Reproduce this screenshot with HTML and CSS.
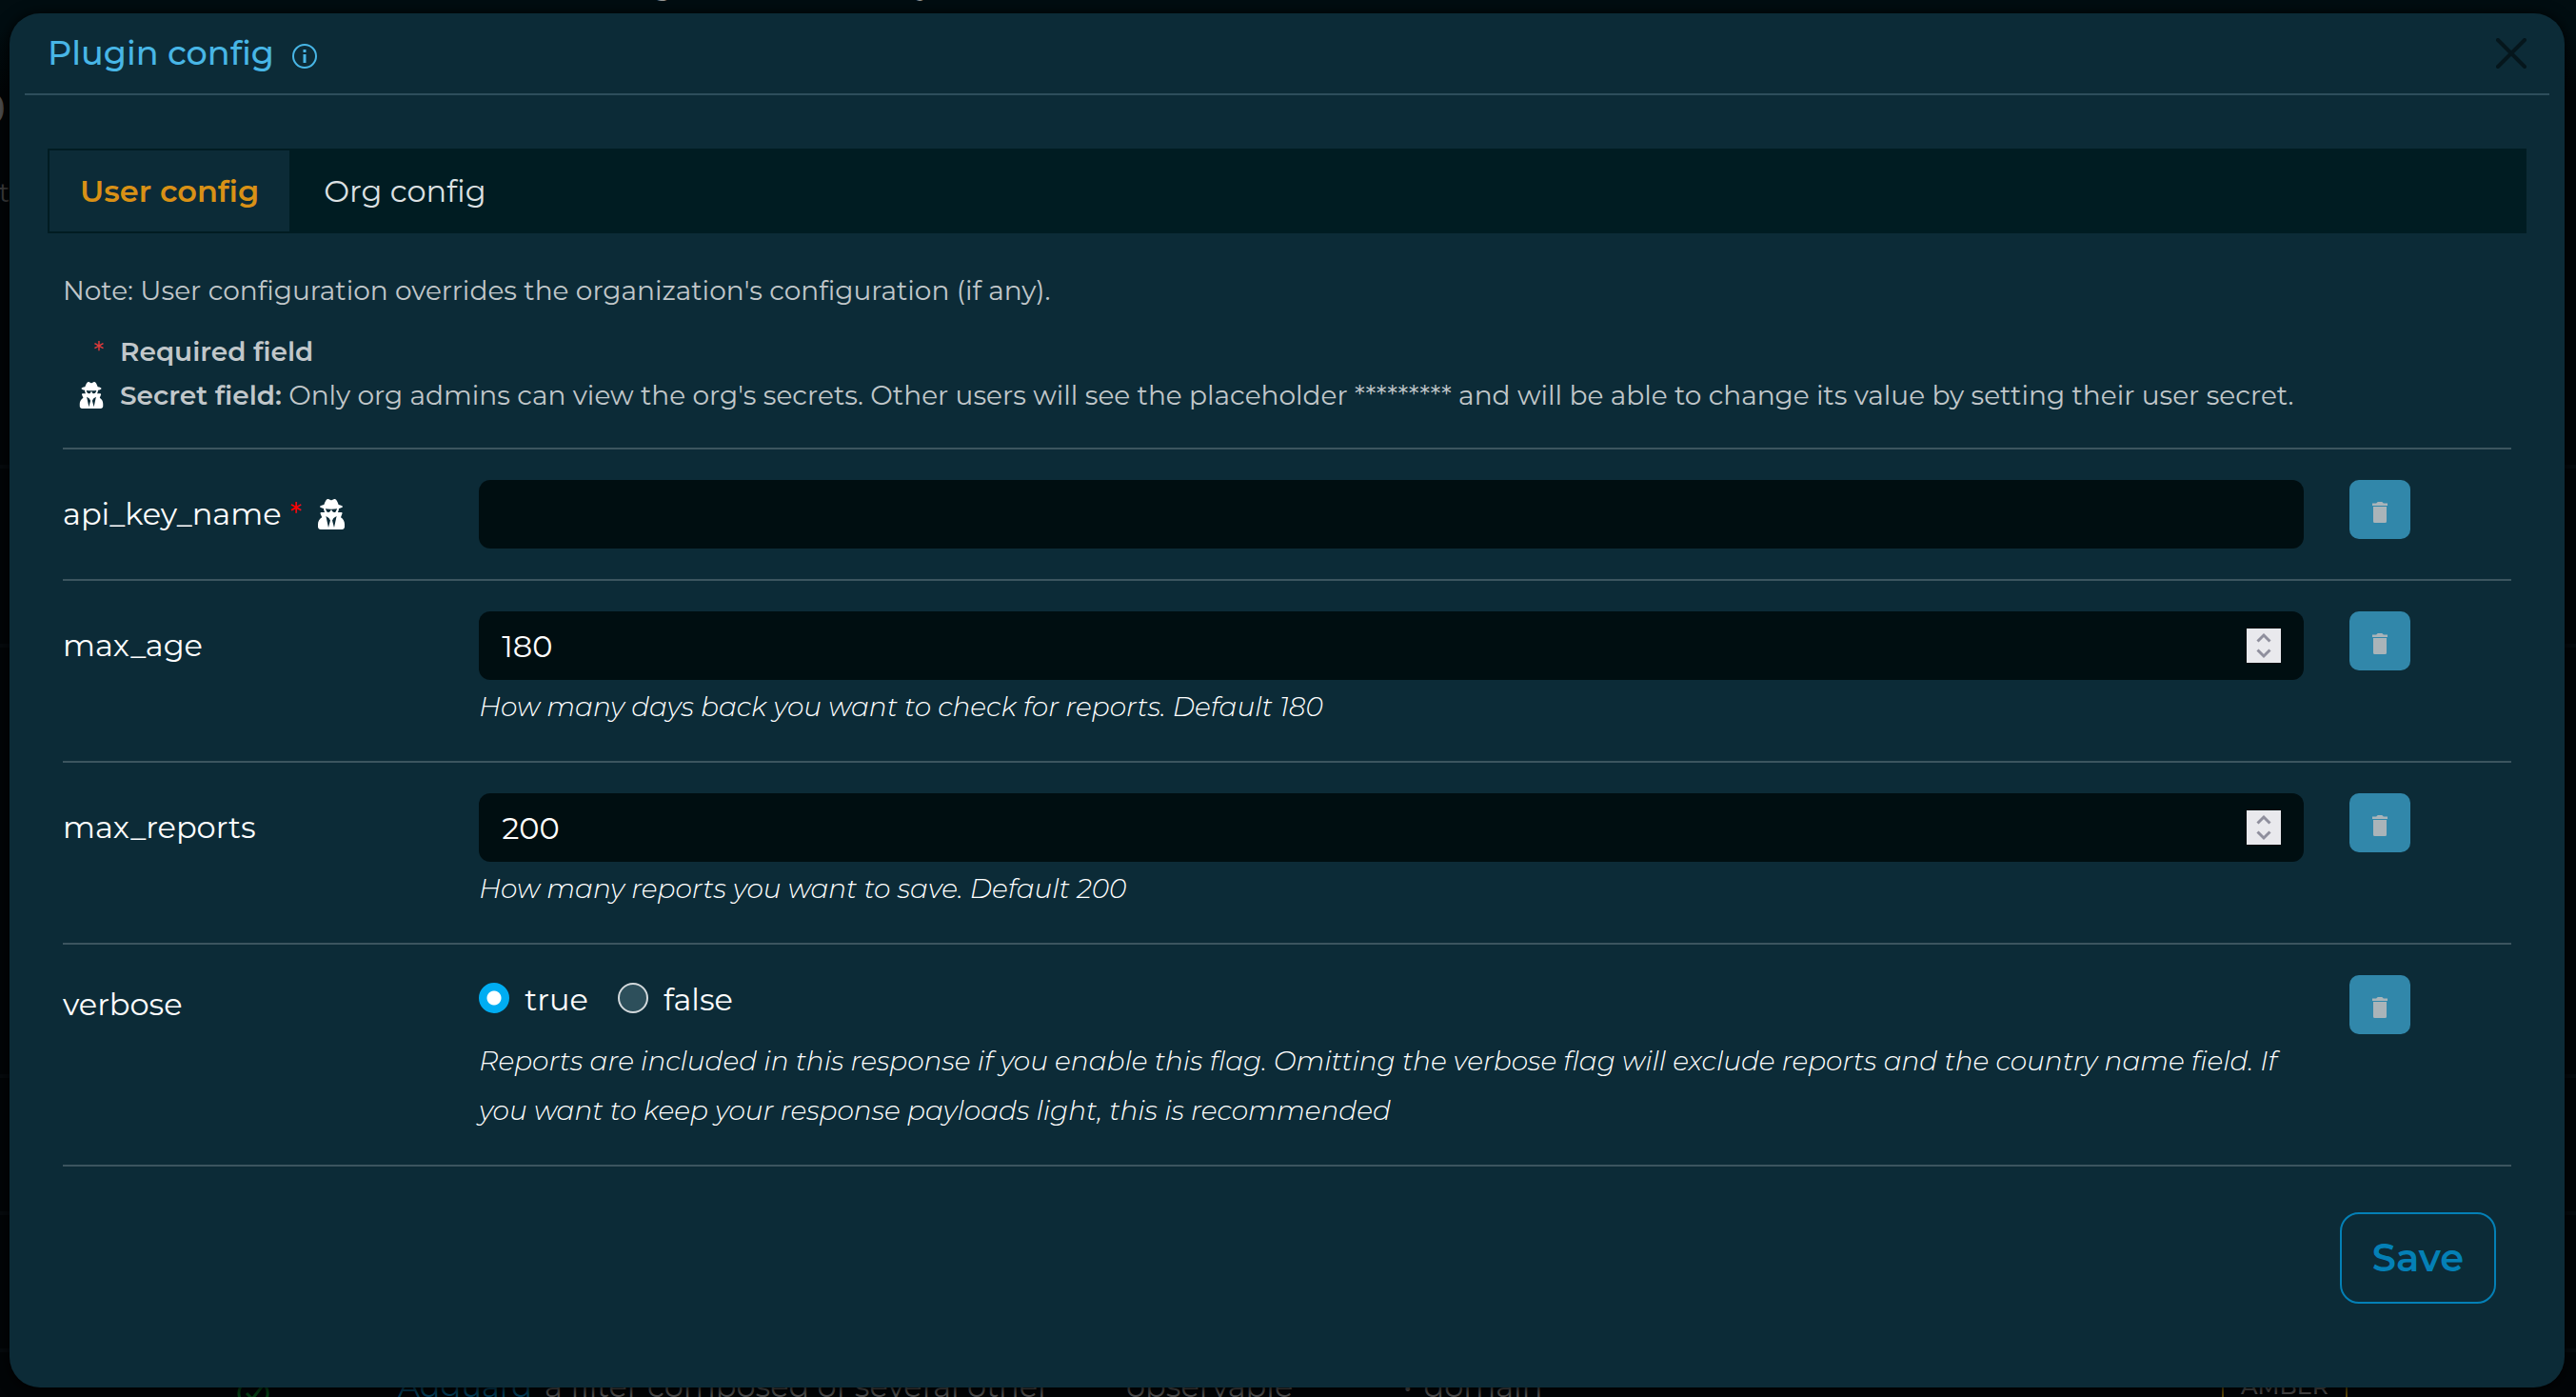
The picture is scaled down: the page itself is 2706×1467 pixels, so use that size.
FILE: index.html
```html
<!DOCTYPE html>
<html lang="en">
<head>
<meta charset="utf-8">
<meta name="viewport" content="width=device-width, initial-scale=1">
<title>Plugin config</title>
<link rel="stylesheet" href="styles.css">
</head>
<body>
<svg class="sprite" aria-hidden="true">
  <symbol id="secret" viewBox="0 0 448 512"><path fill="currentColor" d="M383.9 308.3l23.9-62.6c4-10.5-3.7-21.7-15-21.7h-58.5c11-18.9 17.8-40.6 17.8-64v-.3c39.2-7.8 64-19.1 64-31.7 0-13.3-27.3-25.1-70.1-33-9.2-32.8-27-65.8-40.6-82.8-9.5-11.9-25.9-15.6-39.5-8.8l-27.6 13.8c-9 4.5-19.6 4.5-28.6 0L182.1 3.4c-13.6-6.8-30-3.1-39.5 8.8-13.5 17-31.4 50-40.6 82.8-42.7 7.9-70 19.7-70 33 0 12.6 24.8 23.9 64 31.7v.3c0 23.4 6.8 45.1 17.8 64H56.3c-11.5 0-19.2 11.7-14.7 22.3l25.8 60.2C27.3 329.8 0 372.7 0 422.4v44.8C0 491.9 20.1 512 44.8 512h358.4c24.7 0 44.8-20.1 44.8-44.8v-44.8c0-48.4-25.8-90.4-64.1-114.1zM176 480l-41.6-192 49.6 32 24 40-32 120zm96 0l-32-120 24-40 49.6-32L272 480zm41.7-298.5c-3.9 11.9-7 24.6-16.5 33.4-10.1 9.3-48 22.4-64-25-2.8-8.4-15.4-8.4-18.3 0-17 50.2-56 32.4-64 25-9.5-8.8-12.7-21.5-16.5-33.4-.8-2.5-6.3-5.7-6.3-5.8v-10.8c28.3 3.6 61 5.8 96 5.8s67.7-2.1 96-5.8v10.8c-.1.1-5.6 3.2-6.4 5.8z"/></symbol>
  <symbol id="trash" viewBox="0 0 16 22"><path fill="currentColor" d="M0 1.6h4.200Q5 0 6 0h4q1 0 1.800 1.600H16V4H0zM1 5h14v15.500q0 1.500-1.500 1.500h-11Q1 22 1 20.500z"/></symbol>
  <symbol id="chevrons" viewBox="0 0 36 36"><path fill="none" stroke="currentColor" stroke-width="3" d="M11.500 13.500 18 7l6.500 6.500M11.500 22.500 18 29l6.500-6.500"/></symbol>
</svg>

<div class="page" aria-hidden="true">
  <div class="page-nav"><span>g</span><span>y</span></div>
  <div class="page-title">0</div>
  <div class="page-sub">t</div>
  <div class="page-table">
    <div class="page-row"></div>
    <div class="page-row"></div>
    <div class="page-row page-row-tall"></div>
    <div class="page-row"></div>
    <div class="page-row"></div>
    <div class="page-row page-row-last">
      <svg class="page-check" viewBox="0 0 34 34"><path fill="none" stroke="currentColor" stroke-width="3" d="M17 2a15 15 0 1 0 .1 0M10 17l6 6L27 9"/></svg>
      <span class="page-link">Adguard</span>
      <span>a filter composed of several other</span>
      <span>observable</span>
      <span class="page-item"><span>•</span><span>domain</span></span>
      <span class="page-tlp">AMBER</span>
    </div>
  </div>
</div>

<main class="modal" role="dialog" aria-labelledby="modal-title">
  <header class="modal-header">
    <h1 class="modal-title" id="modal-title">Plugin config</h1>
    <svg class="info" viewBox="0 0 26 26" aria-hidden="true"><circle cx="13" cy="13" r="12" fill="none" stroke="currentColor" stroke-width="2"/><path fill="currentColor" d="M11.500 6h3v3h-3zM11.500 11h3v9h-3z"/></svg>
    <button class="close" type="button" aria-label="Close"><svg viewBox="0 0 32 32"><path fill="none" stroke="currentColor" stroke-width="4" stroke-linecap="round" d="M2 2l28 28M30 2 2 30"/></svg></button>
  </header>

  <div class="modal-body">
    <nav class="tabs" role="tablist">
      <button class="tab tab-active" type="button" role="tab" aria-selected="true">User config</button>
      <button class="tab" type="button" role="tab" aria-selected="false">Org config</button>
    </nav>

    <form class="config">
      <div class="notes">
        <p class="note">Note: User configuration overrides the organization's configuration (if any).</p>
        <p class="legend"><span class="legend-mark legend-star">*</span><b>Required field</b></p>
        <p class="legend"><span class="legend-mark"><svg class="legend-secret" aria-hidden="true"><use href="#secret"/></svg></span><span><b>Secret field:</b> Only org admins can view the org's secrets. Other users will see the placeholder ********* and will be able to change its value by setting their user secret.</span></p>
      </div>

      <div class="row">
        <label class="label" for="api-key">api_key_name <span class="star">*</span><svg class="label-secret" aria-hidden="true"><use href="#secret"/></svg></label>
        <div class="field"><input class="input" id="api-key" type="text"></div>
        <button class="delete" type="button" aria-label="Delete api_key_name"><svg><use href="#trash"/></svg></button>
      </div>

      <div class="row">
        <label class="label" for="max-age">max_age</label>
        <div>
          <div class="field"><input class="input" id="max-age" type="number" value="180"><svg class="spinner" aria-hidden="true"><use href="#chevrons"/></svg></div>
          <p class="help">How many days back you want to check for reports. Default 180</p>
        </div>
        <button class="delete" type="button" aria-label="Delete max_age"><svg><use href="#trash"/></svg></button>
      </div>

      <div class="row">
        <label class="label" for="max-reports">max_reports</label>
        <div>
          <div class="field"><input class="input" id="max-reports" type="number" value="200"><svg class="spinner" aria-hidden="true"><use href="#chevrons"/></svg></div>
          <p class="help">How many reports you want to save. Default 200</p>
        </div>
        <button class="delete" type="button" aria-label="Delete max_reports"><svg><use href="#trash"/></svg></button>
      </div>

      <div class="row">
        <span class="label label-short" id="verbose-label">verbose</span>
        <div>
          <div class="radios" role="radiogroup" aria-labelledby="verbose-label">
            <label class="choice"><input class="radio" type="radio" name="verbose" checked>true</label>
            <label class="choice"><input class="radio" type="radio" name="verbose">false</label>
          </div>
          <p class="help">Reports are included in this response if you enable this flag. Omitting the verbose flag will exclude reports and the country name field. If you want to keep your response payloads light, this is recommended</p>
        </div>
        <button class="delete" type="button" aria-label="Delete verbose"><svg><use href="#trash"/></svg></button>
      </div>

      <div class="actions"><button class="save" type="submit">Save</button></div>
    </form>
  </div>
</main>
</body>
</html>
```
FILE: styles.css
```css
* { box-sizing: border-box; }

body {
  margin: 0;
  min-height: 100vh;
  display: grid;
  background: #020507;
  color: #fff;
  font: 400 32px/48px Montserrat, Inter, "Liberation Sans", sans-serif;
  overflow: hidden;
}

p, h1 { margin: 0; }
b { font-weight: 600; }
button, input { font: inherit; color: inherit; }
button { border: 0; padding: 0; cursor: pointer; }
svg { display: block; flex: none; }
.sprite { position: absolute; width: 0; height: 0; }

/* Dimmed page behind the dialog; both share one grid cell */
.page, .modal { grid-area: 1 / 1; }

.page {
  height: 100vh;
  overflow: hidden;
  background: linear-gradient(#010d11, #010d11 32px, #020507 96px);
  color: #5c5c5c;
}

.page-nav {
  display: flex;
  gap: 256px;
  margin-top: -40px;
  padding-left: 685px;
  color: #999;
}

.page-title, .page-sub {
  display: flex;
  justify-content: flex-end;
}

.page-title {
  width: 6px;
  padding-top: 74px;
  color: #505050;
  font-size: 48px;
  font-weight: 500;
  line-height: 64px;
}

.page-sub {
  width: 10px;
  padding-top: 32px;
  color: #404040;
  font-size: 28px;
}

.page-table { padding-top: 18px; }

.page-row {
  height: 144px;
  border-bottom: 4px solid #060b0e;
}

.page-row:first-child { height: 248px; }
.page-row:nth-child(2) { height: 188px; }
.page-row-tall { height: 452px; }

.page-row-last {
  display: grid;
  grid-template-columns: 169px 154px 611px 291px 860px auto;
  justify-content: start;
  align-items: start;
  height: auto;
  padding: 12px 0 0 249px;
  white-space: nowrap;
}

.page-check { width: 34px; height: 34px; margin-top: 14px; color: #064a17; }
.page-link { color: #064866; }
.page-item { display: flex; gap: 12px; }

.page-tlp {
  padding: 0 18px;
  border: solid #6b5205;
  border-width: 0 2px;
  font-size: 24px;
  font-weight: 500;
}

.modal {
  margin: 14px 12px 10px 10px;
  border-radius: 32px;
  background: #0c2b37;
  box-shadow: 0 2px 16px #000;
}

.modal-header {
  display: flex;
  align-items: center;
  height: 86px;
  margin: 0 16px;
  padding: 0 24px;
  border-bottom: 2px solid #2e4e5b;
  color: #48b6e6;
}

.modal-title {
  font-size: 35px;
  font-weight: 500;
}

.info {
  width: 26px;
  height: 26px;
  margin: 6px 0 0 19px;
}

.close {
  width: 32px;
  height: 32px;
  margin-left: auto;
  background: none;
  color: #05161c;
}

.modal-body { padding: 56px 40px 88px; }

.tabs {
  display: flex;
  gap: 4px;
  border: 2px solid #001c22;
  background: #001c22;
}

.tab {
  height: 85px;
  padding: 0 32px;
  background: none;
  color: #dde1e3;
}

.tab-active {
  background: #0c2b37;
  color: #d99116;
  font-weight: 600;
}

.config { padding: 39px 16px 0; }

.notes {
  padding-bottom: 32px;
  color: #c1c7ca;
  font-size: 28px;
}

.note { margin-bottom: 20px; line-height: 42px; }

.legend {
  display: flex;
  gap: 17px;
  line-height: 46px;
}

.legend-mark {
  display: flex;
  align-items: center;
  justify-content: flex-end;
  width: 43px;
}

.legend-star { color: #e23b3b; }
.legend-secret { width: 26px; height: 28px; color: #fff; }

.row {
  display: grid;
  grid-template-columns: 17% minmax(0, 1fr) 218px;
  align-items: start;
  padding: 32px 0;
  border-top: 2px solid #3c555f;
}

.label {
  display: flex;
  align-items: center;
  gap: 9px;
  line-height: 72px;
}

.label-short { line-height: 62px; }
.star { color: #f00; }
.label-secret { width: 28px; height: 32px; margin-left: 8px; }

.field {
  display: flex;
  align-items: center;
  height: 72px;
  padding: 0 24px;
  border-radius: 12px;
  background: #000e11;
}

.input {
  flex: 1;
  min-width: 0;
  height: 72px;
  padding: 0;
  border: 0;
  outline: 0;
  background: none;
  appearance: textfield;
}

.input::-webkit-inner-spin-button { appearance: none; }

.spinner {
  width: 36px;
  height: 36px;
  background: #e9e9ed;
  color: #8f8f9d;
}

.help {
  margin: 2px 0 -1px;
  font-size: 28px;
  font-style: italic;
  font-weight: 340;
  line-height: 52px;
}

.delete {
  display: grid;
  place-items: center;
  width: 64px;
  height: 62px;
  margin-left: 48px;
  padding-top: 5px;
  border-radius: 10px;
  background: #3187aa;
  color: #aab4b9;
}

.delete svg { width: 16px; height: 22px; }

.radios {
  display: flex;
  gap: 31px;
  height: 62px;
}

.choice {
  display: flex;
  gap: 16px;
  line-height: 52px;
}

.radio {
  appearance: none;
  width: 32px;
  height: 32px;
  margin: 8px 0 0;
  border: 2px solid #d3d9dc;
  border-radius: 50%;
  background: #2d4f5b;
}

.radio:checked {
  border-color: #00adf2;
  background: radial-gradient(circle, #fff 7px, #00adf2 8px);
}

.actions {
  display: flex;
  justify-content: flex-end;
  padding: 48px 16px 0;
  border-top: 2px solid #3c555f;
}

.save {
  width: 164px;
  height: 96px;
  border: 2px solid #0480b6;
  border-radius: 20px;
  background: none;
  color: #0480b6;
  font-size: 40px;
  font-weight: 600;
}
```
